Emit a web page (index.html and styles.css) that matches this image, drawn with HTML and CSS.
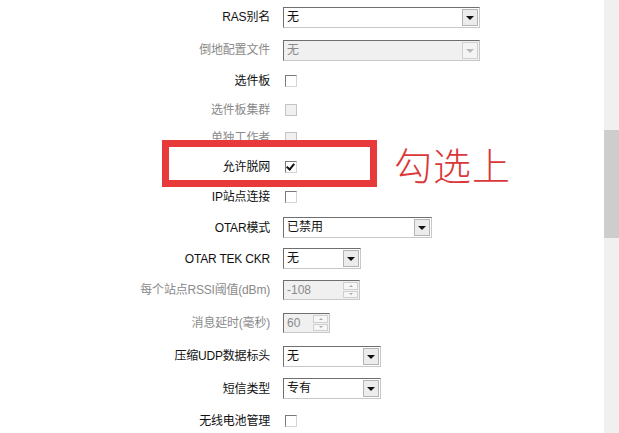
FILE: index.html
```html
<!DOCTYPE html>
<html lang="zh-CN">
<head>
    <meta charset="UTF-8">
    <title>无线电设置</title>
    <link rel="stylesheet" href="styles.css">
</head>
<body>
    <div class="page">
        <div class="form">
            <label class="lbl">RAS别名</label>
            <div class="ctl"><div class="select w197"><span class="val">无</span><span class="arrow"></span></div></div>

            <label class="lbl off">倒地配置文件</label>
            <div class="ctl"><div class="select w197 disabled"><span class="val">无</span><span class="arrow"></span></div></div>

            <label class="lbl">选件板</label>
            <div class="ctl"><span class="check"></span></div>

            <label class="lbl off">选件板集群</label>
            <div class="ctl"><span class="check disabled"></span></div>

            <label class="lbl off">单独工作者</label>
            <div class="ctl"><span class="check disabled"></span></div>

            <label class="lbl">允许脱网</label>
            <div class="ctl"><span class="check checked"></span></div>

            <label class="lbl">IP站点连接</label>
            <div class="ctl"><span class="check"></span></div>

            <label class="lbl">OTAR模式</label>
            <div class="ctl"><div class="select w149"><span class="val">已禁用</span><span class="arrow"></span></div></div>

            <label class="lbl">OTAR TEK CKR</label>
            <div class="ctl"><div class="select w78"><span class="val">无</span><span class="arrow"></span></div></div>

            <label class="lbl off">每个站点RSSI阈值(dBm)</label>
            <div class="ctl"><div class="spin w77"><span class="val">-108</span><span class="spin-btns"><i class="up"></i><i class="down"></i></span></div></div>

            <label class="lbl off">消息延时(毫秒)</label>
            <div class="ctl"><div class="spin w47"><span class="val">60</span><span class="spin-btns"><i class="up"></i><i class="down"></i></span></div></div>

            <label class="lbl">压缩UDP数据标头</label>
            <div class="ctl"><div class="select w98"><span class="val">无</span><span class="arrow"></span></div></div>

            <label class="lbl">短信类型</label>
            <div class="ctl"><div class="select w98"><span class="val">专有</span><span class="arrow"></span></div></div>

            <label class="lbl">无线电池管理</label>
            <div class="ctl"><span class="check"></span></div>
        </div>

        <!-- annotation on top of the screenshot -->
        <div class="mark"></div>
        <div class="note">勾选上</div>

        <div class="scrollbar"><div class="thumb"></div></div>
    </div>
</body>
</html>
```

FILE: styles.css
```css
html, body {
    margin: 0;
    padding: 0;
    background: #fff;
}
body {
    font-family: "Liberation Sans", "Noto Sans CJK SC", sans-serif;
    font-size: 12px;
    color: #111;
}
.page {
    position: relative;
    width: 619px;
    height: 433px;
    overflow: hidden;
}
.form {
    display: grid;
    grid-template-columns: 270px 300px;
    grid-template-rows: 34px 32px 30px 27px 29px 30px 30px 31px 31px 32px 34px 32px 33px 31px;
    column-gap: 13px;
    align-items: center;
}
.lbl {
    text-align: right;
    white-space: nowrap;
    line-height: 14px;
    letter-spacing: -0.2px;
}
.lbl.off {
    color: #8a8a8a;
}
.ctl {
    display: flex;
    align-items: center;
}

/* select boxes */
.select, .spin {
    display: flex;
    align-items: stretch;
    height: 21px;
    box-sizing: border-box;
    border: 1px solid #8c8c8c;
    border-top-color: #6f6f6f;
    border-left-color: #6f6f6f;
    border-bottom-color: #c8c8c8;
    border-right-color: #c8c8c8;
    background: #fff;
    padding: 1px;
}
.val {
    flex: 1;
    padding-left: 2px;
    line-height: 17px;
}
.arrow {
    width: 16px;
    box-sizing: border-box;
    border: 1px solid #b4b4b4;
    background: #ececec;
    display: flex;
    align-items: center;
    justify-content: center;
}
.arrow::after {
    content: "";
    border-left: 4px solid transparent;
    border-right: 4px solid transparent;
    border-top: 4px solid #111;
    margin-top: 1px;
}
.select.disabled {
    background: #f0f0f0;
}
.select.disabled .val {
    color: #8a8a8a;
}
.select.disabled .arrow {
    border-color: #d0d0d0;
    background: #f4f4f4;
}
.select.disabled .arrow::after {
    border-top-color: #b8b8b8;
}

.w197 { width: 197px; }
.w149 { width: 149px; }
.w98 { width: 98px; }
.w78 { width: 78px; }
.w77 { width: 77px; }
.w47 { width: 47px; }

/* spinners (disabled) */
.spin {
    height: 20px;
    background: #f0f0f0;
}
.spin .val {
    color: #8a8a8a;
}
.spin-btns {
    width: 15px;
    display: flex;
    flex-direction: column;
    gap: 1px;
}
.spin-btns i {
    flex: 1;
    border: 1px solid #cfcfcf;
    background: #f6f6f6;
    display: flex;
    align-items: center;
    justify-content: center;
}
.spin-btns .up::after,
.spin-btns .down::after {
    content: "";
    border-left: 2px solid transparent;
    border-right: 2px solid transparent;
}
.spin-btns .up::after {
    border-bottom: 2px solid #aaa;
}
.spin-btns .down::after {
    border-top: 2px solid #aaa;
}

/* checkboxes */
.check {
    width: 12px;
    height: 12px;
    box-sizing: border-box;
    margin-left: 2px;
    border: 1px solid #8c8c8c;
    border-top-color: #7a7a7a;
    border-left-color: #7a7a7a;
    border-bottom-color: #d4d4d4;
    border-right-color: #d4d4d4;
    background: #fff;
    position: relative;
}
.check.disabled {
    background: #f0f0f0;
    border-color: #c4c4c4;
}
.check.checked::after {
    content: "";
    position: absolute;
    left: 2px;
    top: 0px;
    width: 3px;
    height: 6px;
    border-right: 2px solid #111;
    border-bottom: 2px solid #111;
    transform: rotate(40deg);
}

/* red annotation */
.mark {
    position: absolute;
    left: 162px;
    top: 140px;
    width: 215px;
    height: 47px;
    box-sizing: border-box;
    border: 7px solid #e8393b;
}
.note {
    position: absolute;
    left: 394px;
    top: 140px;
    font-family: "Noto Sans CJK SC", sans-serif;
    font-weight: 300;
    font-size: 38px;
    line-height: 48px;
    letter-spacing: 1px;
    color: #d9383a;
}

/* scrollbar */
.scrollbar {
    position: absolute;
    right: 0;
    top: 0;
    width: 15px;
    height: 433px;
    background: #f0f0f0;
}
.thumb {
    margin-top: 130px;
    height: 108px;
    background: #cdcdcd;
}
```
